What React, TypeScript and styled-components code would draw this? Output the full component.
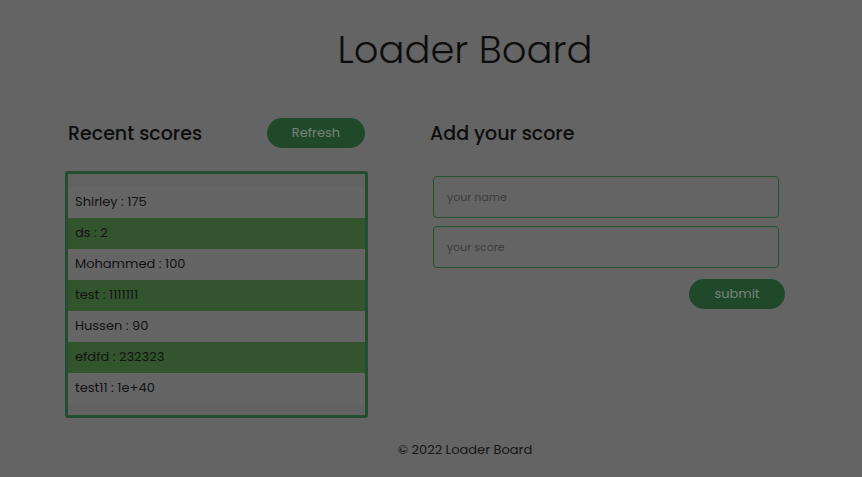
import styled, { createGlobalStyle } from "styled-components";

const GlobalStyle = createGlobalStyle`
  body {
    margin: 0;
    background: #646464;
    font-family: 'Poppins', 'Noto Sans', 'Open Sans', sans-serif;
    color: #0d0d0d;
  }
`;

const scores = [
  { user: "Shirley", score: "175" },
  { user: "ds", score: "2" },
  { user: "Mohammed", score: "100" },
  { user: "test", score: "1111111" },
  { user: "Hussen", score: "90" },
  { user: "efdfd", score: "232323" },
  { user: "test11", score: "1e+40" },
];

export default function App() {
  return (
    <Page>
      <GlobalStyle />
      <Title>Loader Board</Title>
      <Main>
        <LeftCol>
          <SectionHead $inset={3}>
            <Heading>Recent scores</Heading>
            <PillButton $w={98}>Refresh</PillButton>
          </SectionHead>
          <List>
            {scores.map((s, i) => (
              <Row key={s.user} $odd={i % 2 === 1}>
                {s.user} : {s.score}
              </Row>
            ))}
          </List>
        </LeftCol>
        <RightCol>
          <SectionHead $inset={0}>
            <Heading>Add your score</Heading>
          </SectionHead>
          <Form onSubmit={(e) => e.preventDefault()}>
            <Input placeholder="your name" />
            <Input placeholder="your score" />
            <SubmitRow>
              <PillButton $w={96} type="submit">submit</PillButton>
            </SubmitRow>
          </Form>
        </RightCol>
      </Main>
      <Footer>© 2022 Loader Board</Footer>
    </Page>
  );
}

const Page = styled.div`
  display: flex;
  flex-direction: column;
  height: 477px;
`;

const Title = styled.h1`
  margin: 26px 0 0 68px;
  text-align: center;
  font-size: 38.5px;
  font-weight: 300;
  line-height: 48px;
`;

const Main = styled.main`
  display: flex;
  gap: 62px;
  padding: 44px 0 0 65px;
`;

const LeftCol = styled.section`
  width: 303px;
  display: flex;
  flex-direction: column;
`;

const RightCol = styled.section`
  width: 355px;
  display: flex;
  flex-direction: column;
`;

const SectionHead = styled.div<{ $inset: number }>`
  display: flex;
  align-items: center;
  justify-content: space-between;
  height: 30px;
  padding: 0 ${(p) => p.$inset}px;
`;

const Heading = styled.h2`
  margin: 0;
  font-size: 19px;
  font-weight: 500;
`;

const PillButton = styled.button<{ $w: number }>`
  width: ${(p) => p.$w}px;
  height: 30px;
  border: none;
  border-radius: 15px;
  background: #20492b;
  color: #77837a;
  font-family: inherit;
  font-size: 13px;
  cursor: pointer;
`;

const List = styled.ul`
  list-style: none;
  margin: 23px 0 0;
  padding: 13px 0 11px;
  border: 3px solid #224d2e;
  border-radius: 3px;
  background: #626262;
`;

const Row = styled.li<{ $odd: boolean }>`
  height: 31px;
  line-height: 30px;
  padding-left: 7px;
  font-size: 13px;
  color: #121212;
  background: ${(p) => (p.$odd ? "#33552d" : "#656565")};
`;

const Form = styled.form`
  display: flex;
  flex-direction: column;
  gap: 8px;
  margin-top: 28px;
  padding-left: 3px;
`;

const Input = styled.input`
  width: 346px;
  height: 42px;
  box-sizing: border-box;
  border: 1px solid #245231;
  border-radius: 4px;
  background: transparent;
  padding: 0 13px;
  font-family: inherit;
  font-size: 11px;
  color: #222;
  outline: none;

  &::placeholder {
    color: #3c3c3c;
  }
`;

const SubmitRow = styled.div`
  display: flex;
  justify-content: flex-end;
  margin-top: 3px;
`;

const Footer = styled.footer`
  margin-top: auto;
  margin-bottom: 17px;
  padding-left: 68px;
  text-align: center;
  font-size: 13px;
  color: #151515;
`;
